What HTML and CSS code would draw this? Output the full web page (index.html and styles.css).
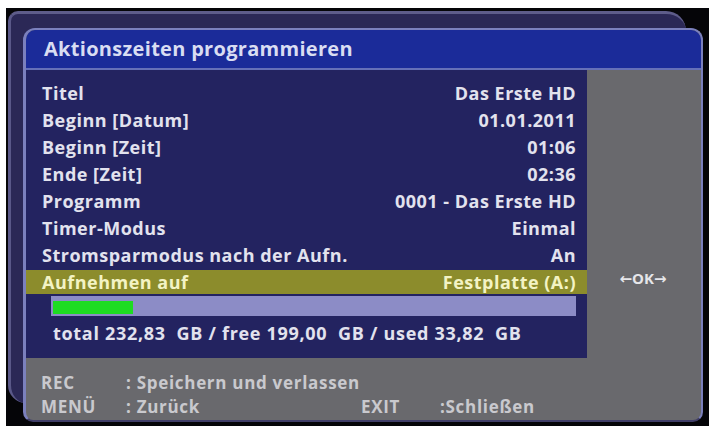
FILE: index.html
```html
<!DOCTYPE html>
<html lang="de">
<head>
<meta charset="utf-8">
<title>Aktionszeiten programmieren</title>
<link rel="stylesheet" href="styles.css">
</head>
<body>
<div class="frame">
  <div class="back"></div>
  <div class="main">
    <div class="titlebar">Aktionszeiten programmieren</div>
    <div class="body">
      <div class="content">
        <div class="row"><span>Titel</span><span>Das Erste HD</span></div>
        <div class="row"><span>Beginn [Datum]</span><span>01.01.2011</span></div>
        <div class="row"><span>Beginn [Zeit]</span><span>01:06</span></div>
        <div class="row"><span>Ende [Zeit]</span><span>02:36</span></div>
        <div class="row"><span>Programm</span><span>0001 - Das Erste HD</span></div>
        <div class="row"><span>Timer-Modus</span><span>Einmal</span></div>
        <div class="row"><span>Stromsparmodus nach der Aufn.</span><span>An</span></div>
        <div class="row selected"><span>Aufnehmen auf</span><span>Festplatte (A:)</span></div>
        <div class="progress"><div class="fill" style="width:80px"></div></div>
        <div class="usage">total 232,83&nbsp; GB / free 199,00&nbsp; GB / used 33,82&nbsp; GB</div>
      </div>
      <div class="side">
        <div class="ok">&larr;OK&rarr;</div>
      </div>
    </div>
    <div class="footer">
      <span>REC</span><span>: Speichern und verlassen</span><span></span><span></span>
      <span>MENÜ</span><span>: Zurück</span><span>EXIT</span><span>:Schließen</span>
    </div>
  </div>
</div>
</body>
</html>
```
FILE: styles.css
```css
* { box-sizing: border-box; }
html, body { margin: 0; padding: 0; background: #ffffff; }
body {
  font-family: "Open Sans", "DejaVu Sans", sans-serif;
  font-weight: 700;
  padding: 8px 0 0 6px;
}
.frame {
  position: relative;
  width: 703px;
  height: 418px;
  background: #050508;
  padding: 20px 0 0 17px;
}
.back {
  position: absolute;
  left: 2px;
  top: 3px;
  width: 678px;
  height: 392px;
  background: #2b2856;
  border-top: 3px solid #5e5c8a;
  border-left: 3px solid #5a5888;
  border-radius: 10px 20px 0 18px;
}
.main {
  position: relative;
  width: 680px;
  height: 394px;
  background: #69696d;
  border: 2px solid #7b80bd;
  border-bottom-color: #403e68;
  border-left-width: 3px;
  border-radius: 12px 12px 10px 10px;
  display: flex;
  flex-direction: column;
  overflow: hidden;
}
.titlebar {
  height: 40px;
  background: #1b2b99;
  border-bottom: 2px solid #6670b8;
  color: #d9ddf2;
  font-size: 20px;
  font-weight: 700;
  padding: 5px 0 0 18px;
  letter-spacing: 0.3px;
}
.body {
  display: flex;
  height: 288px;
}
.content {
  width: 561px;
  background: #232360;
  padding-top: 9px;
}
.row {
  height: 27px;
  display: flex;
  justify-content: space-between;
  align-items: center;
  padding: 0 11px 0 16px;
  color: #e2e2ee;
  font-size: 18px;
  letter-spacing: 0.5px;
}
.row.selected {
  background: #8c8c2c;
  color: #f3f3c4;
  height: 24px;
  margin-top: 2px;
  margin-bottom: 1px;
}
.progress {
  margin: 2px 11px 0 25px;
  height: 20px;
  background: #8c8cc6;
  padding: 5px 0 2px 2px;
}
.fill {
  height: 100%;
  background: #1edc22;
}
.usage {
  padding: 5px 0 0 27px;
  color: #e2e2ee;
  font-size: 18px;
  letter-spacing: 0.7px;
}
.side {
  flex: 1;
  background: #69696d;
  padding-top: 198px;
  text-align: center;
  padding-right: 2px;
}
.ok {
  color: #e6e6ea;
  font-size: 15px;
  font-weight: 700;
}
.footer {
  flex: 1;
  display: grid;
  grid-template-columns: 85px 235px 79px auto;
  grid-auto-rows: 24px;
  align-items: center;
  padding: 12px 0 0 15px;
  color: #c9c9ce;
  font-size: 17px;
  letter-spacing: 0.7px;
}
```
